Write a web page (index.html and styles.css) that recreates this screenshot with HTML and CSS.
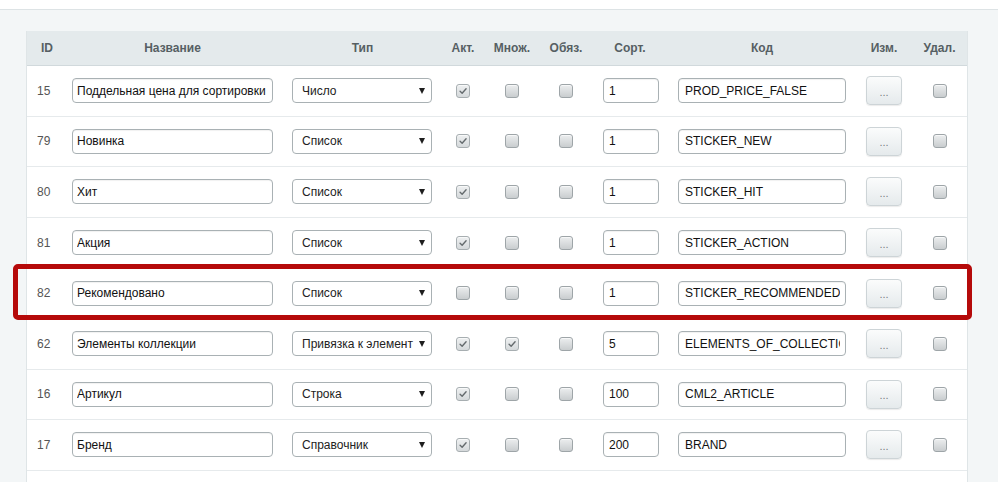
FILE: index.html
```html
<!DOCTYPE html>
<html lang="ru">
<head>
<meta charset="utf-8">
<title>Свойства</title>
<link rel="stylesheet" href="styles.css">
</head>
<body>
<div class="topbar"></div>
<div class="content">
  <div class="grid">
    <div class="row head">
      <div class="h h-id">ID</div>
      <div class="h">Название</div>
      <div class="h">Тип</div>
      <div class="h">Акт.</div>
      <div class="h">Множ.</div>
      <div class="h">Обяз.</div>
      <div class="h">Сорт.</div>
      <div class="h">Код</div>
      <div class="h">Изм.</div>
      <div class="h">Удал.</div>
    </div>

    <div class="row">
      <div class="c-id">15</div>
      <div class="c-in"><input class="inp inp-name" readonly value="Поддельная цена для сортировки"></div>
      <div class="c-in c-type"><div class="sel"><span class="sel-text">Число</span><span class="sel-arrow"></span></div></div>
      <div class="c-mid"><span class="cb on"><svg viewBox="0 0 14 14"><path d="M3.6 7.3 L6 9.6 L10.6 4.4"/></svg></span></div>
      <div class="c-mid"><span class="cb"></span></div>
      <div class="c-mid"><span class="cb"></span></div>
      <div class="c-in c-sort"><input class="inp inp-sort" readonly value="1"></div>
      <div class="c-in"><input class="inp inp-code" readonly value="PROD_PRICE_FALSE"></div>
      <div class="c-mid"><span class="btn">...</span></div>
      <div class="c-mid"><span class="cb"></span></div>
    </div>

    <div class="row">
      <div class="c-id">79</div>
      <div class="c-in"><input class="inp inp-name" readonly value="Новинка"></div>
      <div class="c-in c-type"><div class="sel"><span class="sel-text">Список</span><span class="sel-arrow"></span></div></div>
      <div class="c-mid"><span class="cb on"><svg viewBox="0 0 14 14"><path d="M3.6 7.3 L6 9.6 L10.6 4.4"/></svg></span></div>
      <div class="c-mid"><span class="cb"></span></div>
      <div class="c-mid"><span class="cb"></span></div>
      <div class="c-in c-sort"><input class="inp inp-sort" readonly value="1"></div>
      <div class="c-in"><input class="inp inp-code" readonly value="STICKER_NEW"></div>
      <div class="c-mid"><span class="btn">...</span></div>
      <div class="c-mid"><span class="cb"></span></div>
    </div>

    <div class="row">
      <div class="c-id">80</div>
      <div class="c-in"><input class="inp inp-name" readonly value="Хит"></div>
      <div class="c-in c-type"><div class="sel"><span class="sel-text">Список</span><span class="sel-arrow"></span></div></div>
      <div class="c-mid"><span class="cb on"><svg viewBox="0 0 14 14"><path d="M3.6 7.3 L6 9.6 L10.6 4.4"/></svg></span></div>
      <div class="c-mid"><span class="cb"></span></div>
      <div class="c-mid"><span class="cb"></span></div>
      <div class="c-in c-sort"><input class="inp inp-sort" readonly value="1"></div>
      <div class="c-in"><input class="inp inp-code" readonly value="STICKER_HIT"></div>
      <div class="c-mid"><span class="btn">...</span></div>
      <div class="c-mid"><span class="cb"></span></div>
    </div>

    <div class="row">
      <div class="c-id">81</div>
      <div class="c-in"><input class="inp inp-name" readonly value="Акция"></div>
      <div class="c-in c-type"><div class="sel"><span class="sel-text">Список</span><span class="sel-arrow"></span></div></div>
      <div class="c-mid"><span class="cb on"><svg viewBox="0 0 14 14"><path d="M3.6 7.3 L6 9.6 L10.6 4.4"/></svg></span></div>
      <div class="c-mid"><span class="cb"></span></div>
      <div class="c-mid"><span class="cb"></span></div>
      <div class="c-in c-sort"><input class="inp inp-sort" readonly value="1"></div>
      <div class="c-in"><input class="inp inp-code" readonly value="STICKER_ACTION"></div>
      <div class="c-mid"><span class="btn">...</span></div>
      <div class="c-mid"><span class="cb"></span></div>
    </div>

    <div class="row">
      <div class="c-id">82</div>
      <div class="c-in"><input class="inp inp-name" readonly value="Рекомендовано"></div>
      <div class="c-in c-type"><div class="sel"><span class="sel-text">Список</span><span class="sel-arrow"></span></div></div>
      <div class="c-mid"><span class="cb"></span></div>
      <div class="c-mid"><span class="cb"></span></div>
      <div class="c-mid"><span class="cb"></span></div>
      <div class="c-in c-sort"><input class="inp inp-sort" readonly value="1"></div>
      <div class="c-in"><input class="inp inp-code" readonly value="STICKER_RECOMMENDED"></div>
      <div class="c-mid"><span class="btn">...</span></div>
      <div class="c-mid"><span class="cb"></span></div>
    </div>

    <div class="row">
      <div class="c-id">62</div>
      <div class="c-in"><input class="inp inp-name" readonly value="Элементы коллекции"></div>
      <div class="c-in c-type"><div class="sel"><span class="sel-text">Привязка к элемент</span><span class="sel-arrow"></span></div></div>
      <div class="c-mid"><span class="cb on"><svg viewBox="0 0 14 14"><path d="M3.6 7.3 L6 9.6 L10.6 4.4"/></svg></span></div>
      <div class="c-mid"><span class="cb on"><svg viewBox="0 0 14 14"><path d="M3.6 7.3 L6 9.6 L10.6 4.4"/></svg></span></div>
      <div class="c-mid"><span class="cb"></span></div>
      <div class="c-in c-sort"><input class="inp inp-sort" readonly value="5"></div>
      <div class="c-in"><input class="inp inp-code" readonly value="ELEMENTS_OF_COLLECTION"></div>
      <div class="c-mid"><span class="btn">...</span></div>
      <div class="c-mid"><span class="cb"></span></div>
    </div>

    <div class="row">
      <div class="c-id">16</div>
      <div class="c-in"><input class="inp inp-name" readonly value="Артикул"></div>
      <div class="c-in c-type"><div class="sel"><span class="sel-text">Строка</span><span class="sel-arrow"></span></div></div>
      <div class="c-mid"><span class="cb on"><svg viewBox="0 0 14 14"><path d="M3.6 7.3 L6 9.6 L10.6 4.4"/></svg></span></div>
      <div class="c-mid"><span class="cb"></span></div>
      <div class="c-mid"><span class="cb"></span></div>
      <div class="c-in c-sort"><input class="inp inp-sort" readonly value="100"></div>
      <div class="c-in"><input class="inp inp-code" readonly value="CML2_ARTICLE"></div>
      <div class="c-mid"><span class="btn">...</span></div>
      <div class="c-mid"><span class="cb"></span></div>
    </div>

    <div class="row">
      <div class="c-id">17</div>
      <div class="c-in"><input class="inp inp-name" readonly value="Бренд"></div>
      <div class="c-in c-type"><div class="sel"><span class="sel-text">Справочник</span><span class="sel-arrow"></span></div></div>
      <div class="c-mid"><span class="cb on"><svg viewBox="0 0 14 14"><path d="M3.6 7.3 L6 9.6 L10.6 4.4"/></svg></span></div>
      <div class="c-mid"><span class="cb"></span></div>
      <div class="c-mid"><span class="cb"></span></div>
      <div class="c-in c-sort"><input class="inp inp-sort" readonly value="200"></div>
      <div class="c-in"><input class="inp inp-code" readonly value="BRAND"></div>
      <div class="c-mid"><span class="btn">...</span></div>
      <div class="c-mid"><span class="cb"></span></div>
    </div>

    <div class="row tail"></div>
  </div>
  <div class="highlight"></div>
</div>
</body>
</html>
```

FILE: styles.css
```css
* { box-sizing: border-box; }

html, body {
  margin: 0;
  padding: 0;
}

body {
  background: #f3f6f7;
  font-family: "Liberation Sans", Arial, sans-serif;
  font-size: 12px;
  color: #333;
  width: 998px;
  height: 482px;
  overflow: hidden;
}

.topbar {
  height: 10px;
  background: #fff;
  border-bottom: 1px solid #dde3e5;
}

.content {
  position: relative;
  padding: 21px 0 0 26px;
}

.grid {
  width: 942px;
  background: #fff;
  border-left: 1px solid #dfe5e7;
  border-right: 1px solid #dfe5e7;
}

.row {
  display: grid;
  grid-template-columns: 35px 221px 159px 42px 56px 52px 76px 188px 56px 55px;
  align-items: center;
  height: 50.6px;
  border-bottom: 1px solid #e6eaec;
}

.row.head {
  height: 35px;
  background: #e4eaec;
  border-bottom: 1px solid #d1d9dc;
}

.row.tail {
  height: 20px;
  border-bottom: 0;
}

.h {
  text-align: center;
  font-weight: bold;
  font-size: 12px;
  color: #565f63;
}

.h-id {
  text-align: left;
  padding-left: 14px;
}

.c-id {
  padding-left: 10px;
  color: #555;
  font-size: 12px;
}

.c-in {
  padding-left: 10px;
  display: flex;
  align-items: center;
}

.c-type { padding-left: 9px; }
.c-sort { padding-left: 11px; }

.c-mid {
  display: flex;
  justify-content: center;
  align-items: center;
}

.inp {
  display: block;
  height: 25px;
  margin: 0;
  padding: 0 5px;
  border: 1px solid #a9b1b4;
  border-radius: 4px;
  background: #fff;
  box-shadow: inset 0 1px 1px rgba(0, 0, 0, 0.06);
  font-family: "Liberation Sans", Arial, sans-serif;
  font-size: 12px;
  color: #111;
  outline: none;
}

.inp-name { width: 201px; padding-left: 4px; }
.inp-sort { width: 56px; }
.inp-code { width: 168px; padding-left: 6px; }

.sel {
  width: 140px;
  height: 25px;
  border: 1px solid #a9b1b4;
  border-radius: 4px;
  background: #fff;
  display: flex;
  align-items: center;
  padding: 0 5px 0 9px;
  gap: 4px;
}

.sel-text {
  flex: 1;
  white-space: nowrap;
  overflow: hidden;
  color: #222;
  font-size: 12px;
}

.sel-arrow {
  width: 0;
  height: 0;
  border-left: 3px solid transparent;
  border-right: 3px solid transparent;
  border-top: 6px solid #1e1e1e;
  margin-right: 1px;
}

.cb {
  display: block;
  width: 14px;
  height: 14px;
  border: 1px solid #9ea5a8;
  border-radius: 3px;
  background: linear-gradient(#eceeef, #c9cdcf);
  box-shadow: inset 0 1px 0 rgba(255, 255, 255, 0.6);
}

.cb.on {
  background: linear-gradient(#eef0f1, #d5d9db);
  border-color: #a7aeb1;
}

.cb svg {
  display: block;
  width: 12px;
  height: 12px;
}

.cb svg path {
  fill: none;
  stroke: #646a6d;
  stroke-width: 1.6;
  stroke-linecap: round;
  stroke-linejoin: round;
}

.btn {
  display: flex;
  align-items: center;
  justify-content: center;
  width: 36px;
  height: 29px;
  border: 1px solid #cdd4d7;
  border-radius: 4px;
  background: linear-gradient(#fbfcfc, #e5eaec);
  box-shadow: 0 1px 1px rgba(0, 0, 0, 0.08);
  color: #7a7f82;
  font-size: 11px;
  padding-top: 2px;
}

.highlight {
  position: absolute;
  left: 13px;
  top: 254px;
  width: 959px;
  height: 56px;
  border: 5px solid #b50a0a;
  border-radius: 5px;
  pointer-events: none;
}
```
